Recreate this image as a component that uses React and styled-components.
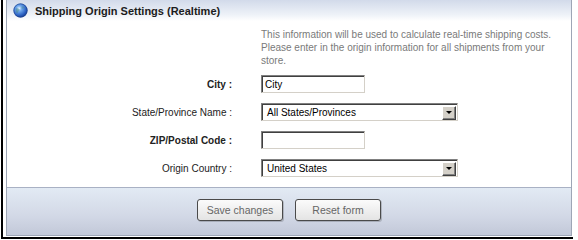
import React from 'react';
import styled, { createGlobalStyle } from 'styled-components';

const GlobalStyle = createGlobalStyle`
  html, body {
    margin: 0;
    padding: 0;
    background: #fff;
    font-family: "Liberation Sans", Arial, sans-serif;
  }
`;

const Screen = styled.div`
  width: 578px;
  height: 240px;
  padding-left: 1px;
  box-sizing: border-box;
  overflow: hidden;
`;

const Frame = styled.div`
  width: 572px;
  height: 239px;
  box-sizing: border-box;
  border-left: 2px solid #000;
  border-bottom: 2px solid #000;
  padding: 0 0 1px 3px;
  display: flex;
`;

const Panel = styled.div`
  width: 566px;
  box-sizing: border-box;
  border: 1px solid #9ea6b6;
  border-top: none;
  display: flex;
  flex-direction: column;
  background: #fff;
`;

const Header = styled.div`
  height: 21px;
  flex-shrink: 0;
  display: flex;
  align-items: center;
  gap: 7px;
  padding-left: 6px;
  background: linear-gradient(#d2daea, #eef2f8 70%, #fff);
`;

const Title = styled.div`
  font-size: 11px;
  font-weight: bold;
  color: #1c1c1c;
`;

const Body = styled.div`
  flex: 1;
  display: grid;
  grid-template-columns: 225px 1fr;
  grid-template-rows: auto;
  grid-auto-rows: 18px;
  column-gap: 29px;
  row-gap: 10px;
  padding: 7px 0 10px;
  align-content: start;
`;

const Intro = styled.div`
  grid-column: 2;
  height: 39px;
  margin-bottom: -2px;
  width: 300px;
  font-size: 10px;
  line-height: 13px;
  color: #7a7a7a;
`;

const Label = styled.label`
  grid-column: 1;
  align-self: center;
  text-align: right;
  font-size: 10px;
  font-weight: ${({ $bold }) => ($bold ? 'bold' : 'normal')};
  color: #222;
`;

const insetBorder = `
  box-sizing: border-box;
  border-top: 1px solid #808080;
  border-left: 1px solid #808080;
  border-bottom: 1px solid #d4d0c8;
  border-right: 1px solid #d4d0c8;
  box-shadow: inset 1px 1px 0 #404040;
  background: #fff;
`;

const TextInput = styled.input`
  ${insetBorder}
  width: 104px;
  height: 18px;
  margin: 0;
  padding: 0 2px 0 3px;
  font-family: inherit;
  font-size: 10px;
  color: #000;
  outline: none;
`;

const Select = styled.div`
  ${insetBorder}
  width: 197px;
  height: 18px;
  display: flex;
  align-items: center;
  justify-content: space-between;
  padding: 1px 1px 0 5px;
  font-size: 10px;
  color: #000;
`;

const DropButton = styled.span`
  width: 14px;
  height: 14px;
  box-sizing: border-box;
  background: #d4d0c8;
  border-top: 1px solid #fff;
  border-left: 1px solid #fff;
  border-bottom: 1px solid #404040;
  border-right: 1px solid #404040;
  box-shadow: inset -1px -1px 0 #808080;
  display: flex;
  align-items: center;
  justify-content: center;

  &::after {
    content: '';
    border-left: 3px solid transparent;
    border-right: 3px solid transparent;
    border-top: 3px solid #000;
    margin: 0 1px 1px 0;
  }
`;

const Footer = styled.div`
  flex-shrink: 0;
  height: 48px;
  box-sizing: border-box;
  border-top: 1px solid #a9b1c4;
  background: linear-gradient(#e2eaf4, #d2d8e6 60%, #c2c8d8);
  display: flex;
  justify-content: center;
  align-items: flex-start;
  gap: 12px;
  padding-top: 11px;
`;

const Button = styled.button`
  width: 86px;
  height: 22px;
  box-sizing: border-box;
  border: 1px solid #4a4a4a;
  border-radius: 3px;
  background: linear-gradient(#fbfbfb, #e4e4e4);
  box-shadow: 1px 1px 0 rgba(0, 0, 0, 0.18);
  font-family: inherit;
  font-size: 10.5px;
  color: #666;
  padding: 0;
`;

const Globe = () => (
  <svg width="15" height="15" viewBox="0 0 15 15">
    <defs>
      <radialGradient id="gl" cx="0.4" cy="0.35" r="0.65">
        <stop offset="0" stopColor="#e6f3ff" />
        <stop offset="0.3" stopColor="#6fa8ec" />
        <stop offset="0.75" stopColor="#2c62c4" />
        <stop offset="1" stopColor="#173f96" />
      </radialGradient>
    </defs>
    <circle cx="7.5" cy="7.5" r="7" fill="url(#gl)" />
    <path d="M3 5.5c1.5-.8 2.6-.2 3.4.8.6.9-.2 1.7-1 2.1-.7.4-.4 1.6-1.3 1.8C3.2 10.3 2.6 8 3 5.5z" fill="#4a8a7a" opacity="0.45" />
    <path d="M9 3.2c1.2.1 2.5.9 3 2-.8.3-1.6-.2-2.2.4-.5.5-1.3.1-1.2-.7.1-.6.1-1.1.4-1.7z" fill="#4a8a7a" opacity="0.4" />
    <circle cx="7.5" cy="7.5" r="6.7" fill="none" stroke="#1d3f8a" strokeWidth="0.6" />
  </svg>
);

const fields = [
  { label: 'City :', bold: true, type: 'text', value: 'City' },
  { label: 'State/Province Name :', bold: false, type: 'select', value: 'All States/Provinces' },
  { label: 'ZIP/Postal Code :', bold: true, type: 'text', value: '' },
  { label: 'Origin Country :', bold: false, type: 'select', value: 'United States' },
];

const App = () => (
  <>
    <GlobalStyle />
    <Screen>
      <Frame>
        <Panel>
          <Header>
            <Globe />
            <Title>Shipping Origin Settings (Realtime)</Title>
          </Header>
          <Body>
            <Intro>
              This information will be used to calculate real-time shipping costs.
              Please enter in the origin information for all shipments from your store.
            </Intro>
            {fields.map(field => (
              <React.Fragment key={field.label}>
                <Label $bold={field.bold}>{field.label}</Label>
                {field.type === 'text' ? (
                  <TextInput defaultValue={field.value} />
                ) : (
                  <Select>
                    <span>{field.value}</span>
                    <DropButton />
                  </Select>
                )}
              </React.Fragment>
            ))}
          </Body>
          <Footer>
            <Button>Save changes</Button>
            <Button>Reset form</Button>
          </Footer>
        </Panel>
      </Frame>
    </Screen>
  </>
);

export default App;
